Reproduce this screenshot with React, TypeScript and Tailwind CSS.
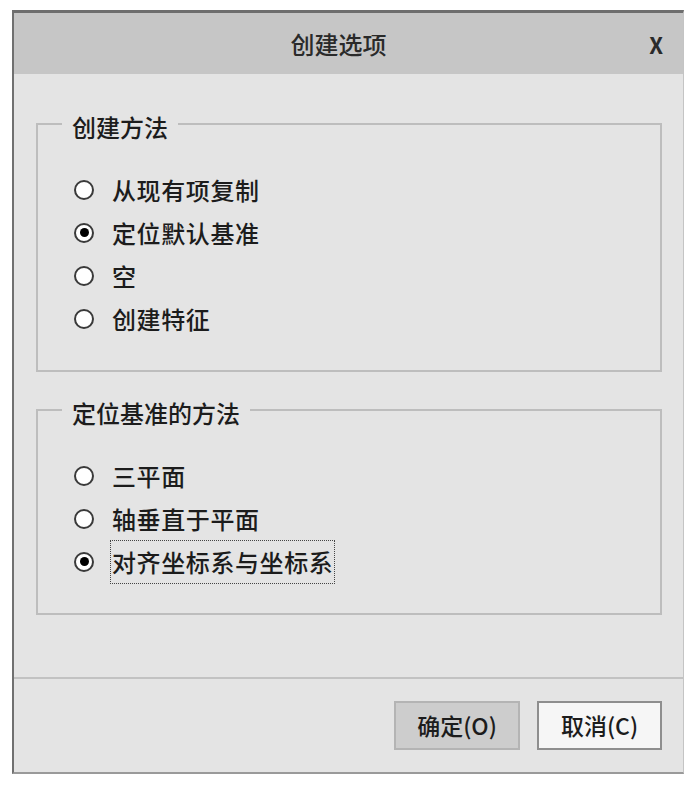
import React from 'react';

const font = { fontFamily: '"Noto Sans CJK SC", "Noto Sans", sans-serif' };

interface RadioProps {
  label: string;
  checked?: boolean;
  focused?: boolean;
}

const Radio: React.FC<RadioProps> = ({ label, checked = false, focused = false }) => (
  <div className="flex items-center h-[43px]">
    <span className="w-[20px] h-[20px] rounded-full border-2 border-[#3a3a3a] bg-white flex items-center justify-center ml-[36px] shrink-0">
      {checked && <span className="w-[9px] h-[9px] rounded-full bg-black" />}
    </span>
    <span
      className={`ml-[16px] text-[24px] leading-[30px] tracking-[0.6px] font-medium text-[#1c1c1c] px-[1px] border border-dotted ${
        focused ? 'border-[#444] py-[6px]' : 'border-transparent'
      }`}
    >
      {label}
    </span>
  </div>
);

interface GroupProps {
  title: string;
  height: string;
  children: React.ReactNode;
}

const Group: React.FC<GroupProps> = ({ title, height, children }) => (
  <div className={`relative border-2 border-[#bdbdbd] ${height} pt-[43px]`}>
    {/* Legend over the top border */}
    <span className="absolute -top-[15px] left-[24px] px-[10px] bg-[#e4e4e4] text-[24px] leading-[34px] font-medium text-[#1c1c1c]">
      {title}
    </span>
    {children}
  </div>
);

export default function App() {
  return (
    <div className="w-[700px] h-[785px] bg-white pt-[10px] pl-[12px]" style={font}>
      <div className="w-[672px] h-[764px] flex flex-col border-t-[3px] border-l-2 border-r border-b-2 border-t-[#6e6e6e] border-l-[#707070] border-r-[#c4c4c4] border-b-[#9a9a9a]">
        {/* Title bar */}
        <div className="h-[61px] bg-[#c6c6c6] grid grid-cols-[1fr_auto_1fr] items-center pr-[20px]">
          <span />
          <span className="text-[24px] text-[#2a2a2a] font-medium">创建选项</span>
          <span className="justify-self-end text-[22px] font-bold text-[#2a2a2a] leading-none">X</span>
        </div>

        {/* Body */}
        <div className="h-[603px] bg-[#e4e4e4] pl-[22px] pr-[21px] pt-[49px] flex flex-col gap-[37px]">
          <Group title="创建方法" height="h-[249px]">
            <Radio label="从现有项复制" />
            <Radio label="定位默认基准" checked />
            <Radio label="空" />
            <Radio label="创建特征" />
          </Group>
          <Group title="定位基准的方法" height="h-[206px]">
            <Radio label="三平面" />
            <Radio label="轴垂直于平面" />
            <Radio label="对齐坐标系与坐标系" checked focused />
          </Group>
        </div>

        {/* Separator */}
        <div className="h-[2px] bg-[#c2c2c2]" />

        {/* Footer */}
        <div className="flex-1 bg-[#e4e4e4] flex justify-end items-start gap-[17px] pt-[22px] pr-[21px]">
          <button className="w-[126px] h-[49px] bg-[#cdcdcd] border-2 border-[#b4b4b4] text-[23px] font-medium text-[#1c1c1c]">
            确定(O)
          </button>
          <button className="w-[125px] h-[49px] bg-[#f6f6f6] border-2 border-[#8e8e8e] text-[23px] font-medium text-[#1c1c1c]">
            取消(C)
          </button>
        </div>
      </div>
    </div>
  );
}
